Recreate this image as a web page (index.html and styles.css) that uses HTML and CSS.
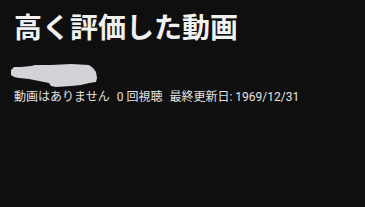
FILE: index.html
```html
<!DOCTYPE html>
<html lang="ja">
<head>
  <meta charset="UTF-8">
  <meta name="viewport" content="width=device-width, initial-scale=1.0">
  <title>高く評価した動画</title>
  <link rel="stylesheet" href="styles.css">
</head>
<body>
  <div class="playlist-header">
    <h1 class="playlist-title">高く評価した動画</h1>
    <div class="owner">
      <!-- owner name is scribbled out in the screenshot -->
      <svg class="owner-redacted" width="90" height="26" viewBox="0 0 90 26">
        <path d="M0 8 L3 5 L10 5 L20 4 L24 3 L40 3 L60 2 L78 3 L82 6 L85 10 L86 16 L85 20 L78 21 L70 23 L60 24 L45 25 L40 24 L38 21 L28 19 L18 17 L8 16 L3 15 L0 13 Z" fill="#d3d3d7"/>
      </svg>
    </div>
    <div class="playlist-stats">
      <span>動画はありません</span>
      <span>0 回視聴</span>
      <span>最終更新日: 1969/12/31</span>
    </div>
  </div>
</body>
</html>
```

FILE: styles.css
```css
:root {
  --bg-color: #0f0f0f;
  --text-color: #f1f1f1;
  --muted-color: #e3e3e3;
}

body {
  margin: 0;
  background-color: var(--bg-color);
  color: var(--text-color);
  font-family: Roboto, "Noto Sans CJK JP", sans-serif;
}

.playlist-header {
  padding: 12px 14px;
}

.playlist-title {
  margin: 0;
  font-size: 28px;
  font-weight: 700;
  line-height: 34px;
}

.owner {
  margin-top: 16px;
  height: 26px;
}

.owner-redacted {
  display: block;
  margin-left: -3px;
}

.playlist-stats {
  display: flex;
  gap: 7px;
  margin-top: 0;
  font-size: 12px;
  line-height: 18px;
  color: var(--muted-color);
}
```
